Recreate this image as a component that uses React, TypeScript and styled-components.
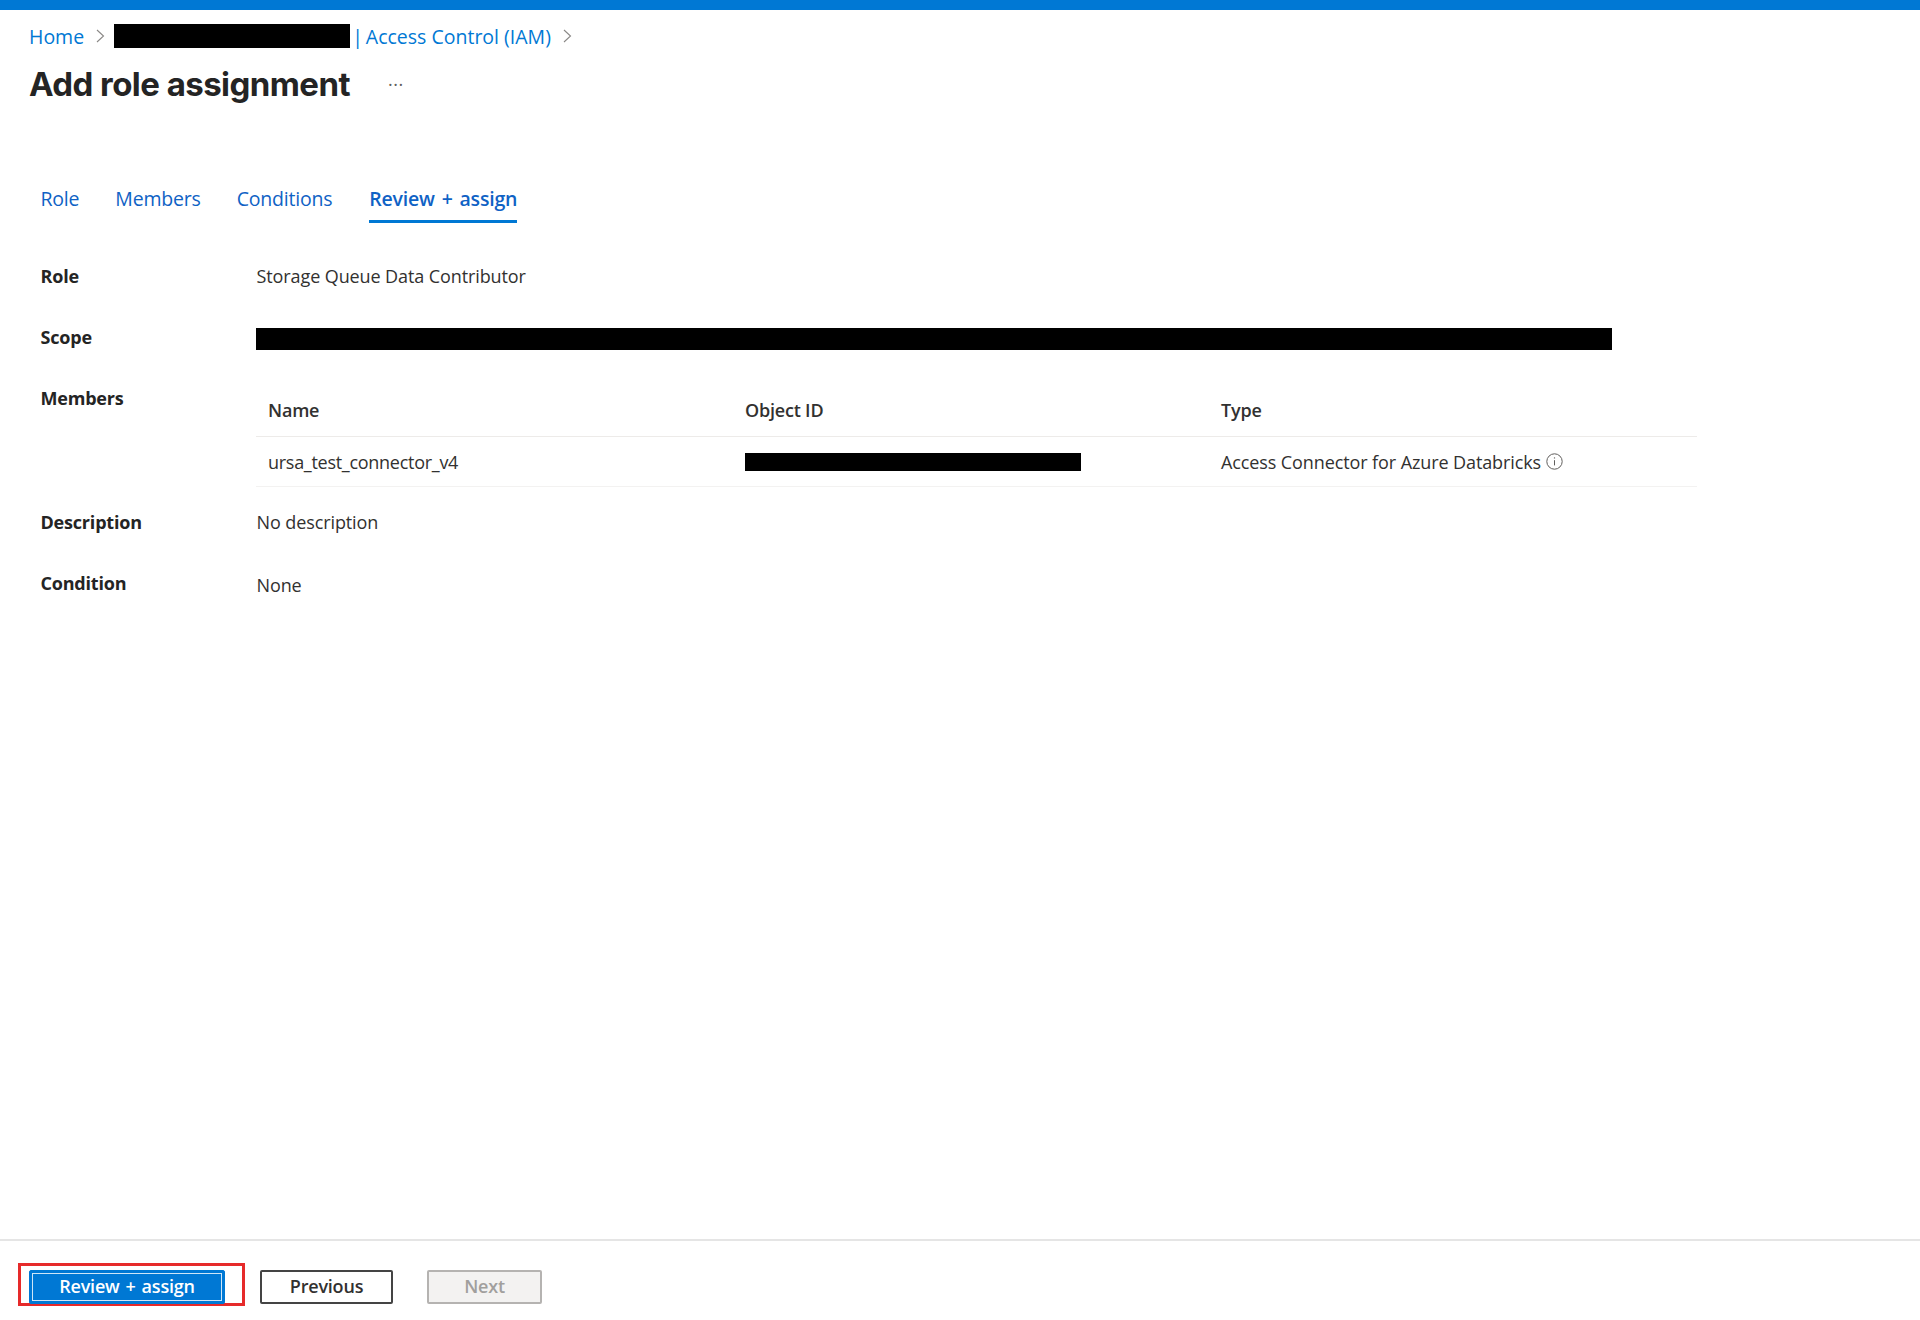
import React from "react";
import styled, { createGlobalStyle } from "styled-components";

const GlobalStyle = createGlobalStyle`
  html, body {
    margin: 0;
    padding: 0;
    background: #fff;
  }
  body {
    font-family: "Open Sans", "Noto Sans", sans-serif;
    font-size: 18px;
    color: #323130;
  }
`;

const Chevron = () => (
  <ChevronIcon width="9" height="14" viewBox="0 0 9 14" fill="none">
    <path d="M1 1l6.5 6L1 13" stroke="#8a8886" strokeWidth="1.1" />
  </ChevronIcon>
);

const InfoIcon = () => (
  <InfoSvg width="17" height="17" viewBox="0 0 17 17" fill="none">
    <circle cx="8.5" cy="8.5" r="7.7" stroke="#605e5c" strokeWidth="1" />
    <path d="M8.5 7.2v5.2" stroke="#605e5c" strokeWidth="1" />
    <circle cx="8.5" cy="4.9" r="0.7" fill="#605e5c" />
  </InfoSvg>
);

const App: React.FC = () => {
  return (
    <>
      <GlobalStyle />
      <Page>
        <TopBar />
        <Header>
          <Breadcrumb>
            <Crumb>Home</Crumb>
            <Chevron />
            <CrumbRedaction />
            <Pipe>|</Pipe>
            <Crumb>Access Control (IAM)</Crumb>
            <Chevron />
          </Breadcrumb>
          <TitleRow>
            <Title>Add role assignment</Title>
            <More>···</More>
          </TitleRow>
        </Header>
        <Tabs>
          <Tab>Role</Tab>
          <Tab>Members</Tab>
          <Tab>Conditions</Tab>
          <Tab active>Review + assign</Tab>
        </Tabs>
        <Details>
          <Row>
            <Label>Role</Label>
            <Value>Storage Queue Data Contributor</Value>
          </Row>
          <Row>
            <Label>Scope</Label>
            <ScopeRedaction />
          </Row>
          <MembersRow>
            <Label>Members</Label>
            <MembersTable>
              <HeadRow>
                <HeadCell>Name</HeadCell>
                <HeadCell>Object ID</HeadCell>
                <HeadCell>Type</HeadCell>
              </HeadRow>
              <BodyRow>
                <NameCell>ursa_test_connector_v4</NameCell>
                <BodyCell>
                  <IdRedaction />
                </BodyCell>
                <TypeCell>
                  Access Connector for Azure Databricks
                  <InfoIcon />
                </TypeCell>
              </BodyRow>
            </MembersTable>
          </MembersRow>
          <Row>
            <Label>Description</Label>
            <Value>No description</Value>
          </Row>
          <Row>
            <Label>Condition</Label>
            <LowValue>None</LowValue>
          </Row>
        </Details>
        <Footer>
          <Highlight>
            <PrimaryButton>Review + assign</PrimaryButton>
          </Highlight>
          <SecondaryButton>Previous</SecondaryButton>
          <DisabledButton>Next</DisabledButton>
        </Footer>
      </Page>
    </>
  );
};

export default App;

const Page = styled.div`
  width: 1920px;
  height: 1320px;
  display: flex;
  flex-direction: column;
  overflow: hidden;
`;
const TopBar = styled.div`
  height: 10px;
  background: #0078d4;
  flex: none;
`;
const Header = styled.div`
  padding: 0 0 0 29px;
  height: 156px;
  flex: none;
`;
const Breadcrumb = styled.div`
  display: flex;
  align-items: center;
  height: 52px;
`;
const Crumb = styled.span`
  color: #0078d4;
  font-size: 19.5px;
`;
const Pipe = styled.span`
  color: #0078d4;
  font-size: 19.5px;
  margin-right: 3px;
`;
const ChevronIcon = styled.svg`
  margin: 0 9px 0 12px;
  flex: none;
`;
const CrumbRedaction = styled.div`
  width: 236px;
  height: 24px;
  background: #000;
  margin-right: 2px;
`;
const TitleRow = styled.div`
  display: flex;
  align-items: center;
  height: 44px;
`;
const Title = styled.h1`
  margin: 0;
  font-family: Inter, "Open Sans", sans-serif;
  font-size: 33px;
  font-weight: 700;
  letter-spacing: -0.55px;
  color: #242424;
`;
const More = styled.span`
  margin-left: 38px;
  font-size: 18px;
  color: #605e5c;
  letter-spacing: 0.5px;
`;
const Tabs = styled.div`
  display: flex;
  gap: 36px;
  padding-left: 40.5px;
  height: 58px;
  flex: none;
`;
const Tab = styled.div<{ active?: boolean }>`
  height: 57px;
  box-sizing: border-box;
  line-height: 66px;
  font-size: 19.5px;
  font-weight: ${(p) => (p.active ? 600 : 400)};
  color: #0f62c5;
  border-bottom: 3px solid ${(p) => (p.active ? "#0078d4" : "transparent")};
  letter-spacing: -0.2px;
  word-spacing: ${(p) => (p.active ? "2px" : "0")};
  margin-left: ${(p) => (p.active ? "1px" : "0")};
`;
const Details = styled.div`
  padding: 22px 0 0 40.5px;
  flex: 1;
`;
const Row = styled.div`
  display: grid;
  grid-template-columns: 216px 1fr;
  height: 60.5px;
  align-items: center;
`;
const MembersRow = styled.div`
  display: grid;
  grid-template-columns: 215.5px 1fr;
  height: 125px;
  align-items: start;
  & > :first-child {
    line-height: 62px;
  }
`;
const Label = styled.div`
  font-size: 18px;
  font-weight: 700;
  color: #242424;
  letter-spacing: -0.2px;
`;
const Value = styled.div`
  font-size: 18px;
  color: #323130;
  letter-spacing: -0.1px;
`;
const LowValue = styled(Value)`
  padding-top: 5px;
`;
const ScopeRedaction = styled.div`
  width: 1356px;
  height: 22px;
  background: #000;
  margin: 5px 0 0 -1px;
`;
const MembersTable = styled.div`
  width: 1441px;
  padding-top: 16px;
`;
const HeadRow = styled.div`
  display: grid;
  grid-template-columns: 477px 476px 1fr;
  height: 54px;
  align-items: center;
  border-bottom: 1px solid #edebe9;
  box-sizing: border-box;
`;
const BodyRow = styled(HeadRow)`
  height: 50px;
  border-bottom-color: #f3f2f1;
`;
const HeadCell = styled.div`
  padding-left: 12px;
  font-size: 18px;
  font-weight: 600;
  color: #323130;
  letter-spacing: -0.2px;
`;
const BodyCell = styled.div`
  padding-left: 12px;
  font-size: 18px;
  color: #323130;
  letter-spacing: -0.1px;
  display: flex;
  align-items: center;
`;
const NameCell = styled(BodyCell)`
  letter-spacing: -0.28px;
`;
const TypeCell = styled(BodyCell)`
  padding-top: 1px;
`;
const IdRedaction = styled.div`
  width: 336px;
  height: 18px;
  background: #000;
`;
const InfoSvg = styled.svg`
  margin: -1px 0 0 5px;
  flex: none;
`;
const Footer = styled.div`
  flex: none;
  height: 81px;
  box-sizing: border-box;
  border-top: 2px solid #e5e5e5;
  display: flex;
  align-items: flex-start;
  padding: 22px 0 0 18px;
`;
const Highlight = styled.div`
  box-sizing: border-box;
  width: 227px;
  height: 43px;
  border: 3px solid #e62a2a;
  padding: 4px 0 0 8px;
  margin-right: 15px;
`;
const BaseButton = styled.button`
  box-sizing: border-box;
  height: 34px;
  font-family: "Open Sans", sans-serif;
  font-size: 18px;
  font-weight: 600;
  border-radius: 2px;
  padding: 0 0 2px;
  letter-spacing: -0.2px;
`;
const PrimaryButton = styled(BaseButton)`
  width: 196px;
  background: #0078d4;
  color: #fff;
  border: 1px solid #0078d4;
  outline: 1.5px solid #cfe6f7;
  outline-offset: -4px;
  word-spacing: 1.5px;
`;
const SecondaryButton = styled(BaseButton)`
  width: 133px;
  margin-top: 7px;
  background: #fff;
  color: #323130;
  border: 2px solid #444;
`;
const DisabledButton = styled(BaseButton)`
  width: 115px;
  margin-top: 7px;
  margin-left: 34px;
  background: #f3f2f1;
  color: #a19f9d;
  border: 2px solid #b5b3b1;
`;
